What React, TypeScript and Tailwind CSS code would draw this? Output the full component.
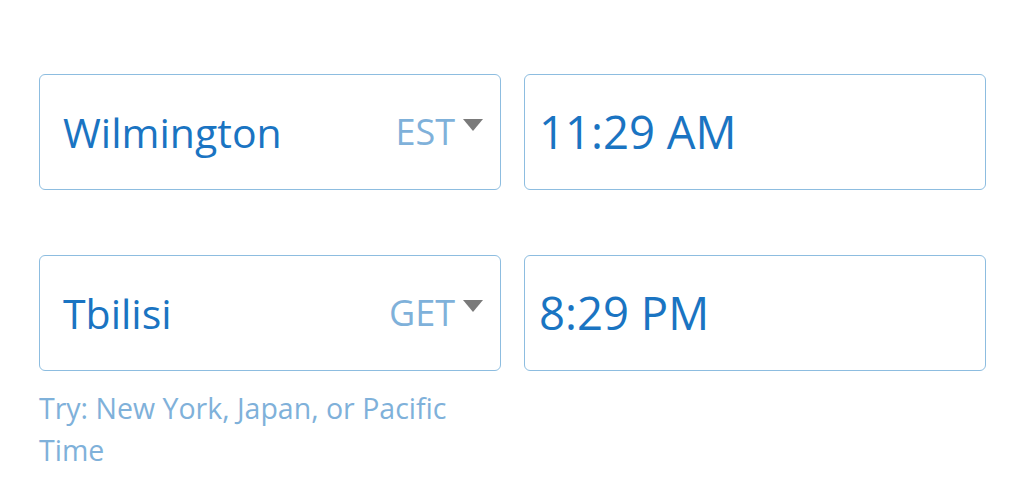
import { Fragment } from 'react';

const rows = [
  { city: 'Wilmington', zone: 'EST', time: '11:29 AM' },
  { city: 'Tbilisi', zone: 'GET', time: '8:29 PM' },
];

export default function App() {
  return (
    <div
      className="w-[1024px] h-[477px] bg-white pl-[39px] pt-[74px]"
      style={{ fontFamily: '"Open Sans", "Noto Sans", sans-serif' }}
    >
      <div className="grid grid-cols-[462px_462px] gap-x-[23px] gap-y-[65px]">
        {rows.map((row) => (
          <Fragment key={row.city}>
            {/* Location select */}
            <div className="h-[116px] border-[1.5px] border-[#8dbde0] rounded-[6px] flex items-center pl-[23px] pr-[17px]">
              <span className="flex-1 text-[41px] text-[#1a74c2] leading-none">{row.city}</span>
              <span className="text-[36px] text-[#7fb1da] leading-none">{row.zone}</span>
              <svg className="ml-[8px] mb-[14px]" width="20" height="12" viewBox="0 0 20 12">
                <path d="M0 0h20L10 12z" fill="#7a7a7a" />
              </svg>
            </div>
            {/* Time */}
            <div className="h-[116px] border-[1.5px] border-[#8dbde0] rounded-[6px] flex items-center pl-[14px]">
              <span className="text-[45.5px] text-[#1a74c2] leading-none">{row.time}</span>
            </div>
          </Fragment>
        ))}
      </div>
      <p className="mt-[16px] w-[440px] text-[28.5px] leading-[42px] text-[#7fb1da]">
        Try: New York, Japan, or Pacific Time
      </p>
    </div>
  );
}
